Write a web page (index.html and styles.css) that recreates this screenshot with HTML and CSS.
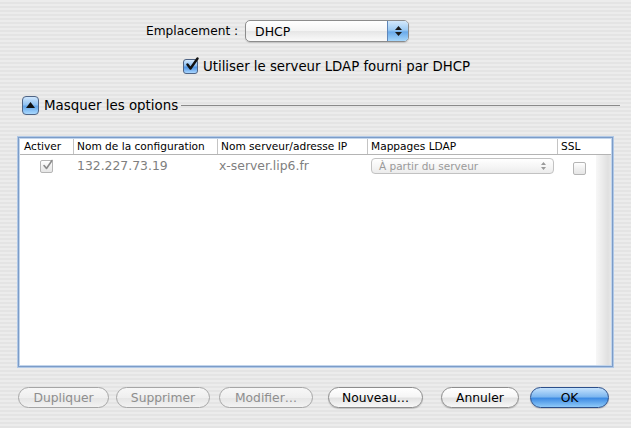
FILE: index.html
```html
<!DOCTYPE html>
<html>
<head>
<meta charset="utf-8">
<link rel="stylesheet" href="styles.css">
</head>
<body>
<div class="dialog">
  <div class="loc-row">
    <span class="label">Emplacement :</span>
    <div class="popup">
      <span class="popup-text">DHCP</span>
      <span class="popup-arrows">
        <svg width="9" height="12" viewBox="0 0 9 12"><path d="M4.5 1 L8 5 L1 5 Z M4.5 11 L8 7 L1 7 Z" fill="#1a1a1a"/></svg>
      </span>
    </div>
  </div>

  <div class="check-row">
    <span class="checkbox checked">
      <svg width="16" height="16" viewBox="0 0 16 16"><path d="M3.5 7.5 L6.5 11.5 L13.5 1.5" fill="none" stroke="#111" stroke-width="2.4" stroke-linecap="round" stroke-linejoin="round"/></svg>
    </span>
    <span class="check-label">Utiliser le serveur LDAP fourni par DHCP</span>
  </div>

  <div class="disclosure-row">
    <span class="disclosure">
      <svg width="9" height="6" viewBox="0 0 9 6"><path d="M4.5 0 L9 6 L0 6 Z" fill="#111"/></svg>
    </span>
    <span class="disc-label">Masquer les options</span>
    <span class="disc-line"></span>
  </div>

  <div class="table-frame">
    <div class="thead">
      <div class="th th-first">Activer</div>
      <div class="th">Nom de la configuration</div>
      <div class="th">Nom serveur/adresse IP</div>
      <div class="th">Mappages LDAP</div>
      <div class="th">SSL</div>
      <div class="th th-corner"></div>
    </div>
    <div class="tbody">
      <div class="rows">
        <div class="tr">
          <div class="td td-center">
            <span class="checkbox small disabled">
              <svg width="13" height="13" viewBox="0 0 13 13"><path d="M3 6.5 L5.5 9.5 L11 1.5" fill="none" stroke="#8a8a8a" stroke-width="1.6" stroke-linecap="round" stroke-linejoin="round"/></svg>
            </span>
          </div>
          <div class="td td-text">132.227.73.19</div>
          <div class="td td-text td-server">x-server.lip6.fr</div>
          <div class="td">
            <div class="mini-popup">
              <span>À partir du serveur</span>
              <svg width="7" height="10" viewBox="0 0 7 10"><path d="M3.5 1 L6 4 L1 4 Z M3.5 9 L6 6 L1 6 Z" fill="#9a9a9a"/></svg>
            </div>
          </div>
          <div class="td td-ssl">
            <span class="checkbox small disabled"></span>
          </div>
        </div>
      </div>
      <div class="scroll-strip"></div>
    </div>
  </div>

  <div class="buttons">
    <span class="btn disabled b-dup">Dupliquer</span>
    <span class="btn disabled b-sup">Supprimer</span>
    <span class="btn disabled b-mod">Modifier…</span>
    <span class="btn b-new">Nouveau…</span>
    <span class="btn b-ann">Annuler</span>
    <span class="btn default b-ok">OK</span>
  </div>
</div>
</body>
</html>
```

FILE: styles.css
```css
html, body {
  margin: 0;
  padding: 0;
}
body {
  width: 631px;
  height: 428px;
  overflow: hidden;
  font-family: "DejaVu Sans", "Liberation Sans", sans-serif;
  font-size: 12px;
  color: #000;
  background: repeating-linear-gradient(to bottom, #ececec 0px, #ececec 2px, #e4e4e4 2px, #e4e4e4 4px);
}
.dialog {
  display: flex;
  flex-direction: column;
  height: 428px;
}

/* location row */
.loc-row {
  display: flex;
  align-items: center;
  padding: 20px 0 0 146px;
  height: 22px;
}
.label {
  width: 99px;
  font-size: 12.2px;
}
.popup {
  display: flex;
  align-items: center;
  width: 162px;
  height: 20px;
  border: 1px solid #8c8c8c;
  border-radius: 5px;
  background: linear-gradient(to bottom, #ffffff 0%, #f4f4f4 50%, #e6e6e6 51%, #fafafa 100%);
  box-shadow: 0 1px 1px rgba(0,0,0,0.15);
  overflow: hidden;
  font-size: 12.5px;
}
.popup-text {
  flex: 1;
  padding-left: 9px;
}
.popup-arrows {
  width: 20px;
  height: 20px;
  display: flex;
  align-items: center;
  justify-content: center;
  border-left: 1px solid #5f86b9;
  background: linear-gradient(to bottom, #d4e9fb 0%, #9ccaf3 45%, #6aaaea 55%, #a7d7fb 100%);
}

/* checkbox row */
.check-row {
  display: flex;
  align-items: center;
  padding: 16px 0 0 183px;
  height: 16px;
}
.checkbox {
  position: relative;
  display: inline-block;
  width: 13px;
  height: 13px;
  border: 1px solid #4f6485;
  border-radius: 3px;
  background: linear-gradient(to bottom, #d8ecff 0%, #86baf0 45%, #4f94e4 55%, #a9d6ff 100%);
  box-sizing: content-box;
}
.checkbox svg {
  position: absolute;
  left: 0;
  top: -3px;
}
.check-label {
  margin-left: 5px;
  font-size: 13.3px;
}

/* disclosure */
.disclosure-row {
  display: flex;
  align-items: center;
  padding: 22px 11px 0 22px;
  height: 19px;
}
.disclosure {
  width: 15px;
  height: 17px;
  border: 1px solid #4f6485;
  border-radius: 4px;
  display: flex;
  align-items: center;
  justify-content: center;
  background: linear-gradient(to bottom, #cfe6fd 0%, #91c3f3 45%, #64a6ea 55%, #a9d8fd 100%);
}
.disclosure svg {
  margin-top: -2px;
}
.disc-label {
  margin-left: 5px;
  font-size: 13.4px;
}
.disc-line {
  flex: 1;
  height: 1px;
  background: #8a8a8a;
  margin-left: 3px;
}

/* table */
.table-frame {
  margin: 22px 18px 0 18px;
  height: 228px;
  border: 1px solid #7c9cc8;
  box-shadow: 0 0 0 1px #b0c8e6, inset 0 0 0 1px #c2d5ec;
  background: #fff;
  display: flex;
  flex-direction: column;
}
.thead {
  display: grid;
  grid-template-columns: 53px 144px 150px 190px 53px;
  height: 15px;
  border-bottom: 1px solid #b4b4b4;
  background: #fff;
  margin: 1px 1px 0 1px;
  font-size: 10.6px;
}
.th {
  border-left: 1px solid #c4c4c4;
  padding-left: 3px;
  line-height: 15px;
  white-space: nowrap;
  overflow: hidden;
}
.th-first {
  border-left: none;
  padding-left: 4px;
}
.th-corner {
  display: none;
}
.tbody {
  flex: 1;
  display: flex;
  margin: 0 1px 1px 1px;
}
.rows {
  flex: 1;
}
.tr {
  display: grid;
  grid-template-columns: 53px 144px 150px 190px 38px;
  height: 21px;
  align-items: center;
}
.td {
  white-space: nowrap;
}
.td-center {
  display: flex;
  justify-content: center;
  padding-top: 1px;
}
.td-text {
  color: #7f7f7f;
  font-size: 12.4px;
  padding-left: 4px;
}
.td-server {
  padding-left: 2px;
}
.checkbox.small {
  width: 11px;
  height: 11px;
  border: 1px solid #b5b5b5;
  border-radius: 2px;
  background: linear-gradient(to bottom, #ffffff 0%, #f0f0f0 50%, #e6e6e6 100%);
}
.checkbox.small svg {
  top: -2px;
}
.td-ssl {
  display: flex;
  justify-content: center;
  padding-top: 6px;
  padding-left: 7px;
}
.mini-popup {
  margin-left: 4px;
  width: 168px;
  height: 14px;
  border: 1px solid #c2c2c2;
  border-radius: 4px;
  background: linear-gradient(to bottom, #ffffff 0%, #f6f6f6 50%, #ececec 100%);
  display: flex;
  align-items: center;
  justify-content: space-between;
  padding: 0 6px 0 7px;
  box-sizing: content-box;
  color: #9a9a9a;
  font-size: 10.5px;
  margin-top: 1px;
}
.scroll-strip {
  width: 15px;
  background: linear-gradient(to right, #f7f7f7 0%, #ececec 40%, #e0e0e0 80%, #e8e8e8 100%);
}

/* buttons */
.buttons {
  display: flex;
  align-items: center;
  padding: 20px 0 0 18px;
}
.btn {
  display: flex;
  align-items: center;
  justify-content: center;
  height: 19px;
  border: 1px solid #8d8d8d;
  border-radius: 11px;
  background: linear-gradient(to bottom, #ffffff 0%, #f6f6f6 45%, #e2e2e2 55%, #f8f8f8 100%);
  box-shadow: 0 1px 1px rgba(0,0,0,0.18);
  font-size: 12.3px;
  box-sizing: content-box;
}
.btn.disabled {
  color: #8e8e8e;
  border-color: #a6a6a6;
  background: linear-gradient(to bottom, #f7f7f7 0%, #efefef 50%, #e6e6e6 55%, #f2f2f2 100%);
  box-shadow: none;
}
.btn.default {
  border-color: #2c4f8a;
  background: linear-gradient(to bottom, #c4e2fd 0%, #7fb8f0 45%, #3f8ce3 55%, #8fcaf9 100%);
}
.b-dup { width: 89px; }
.b-sup { width: 92px; margin-left: 7px; }
.b-mod { width: 92px; margin-left: 9px; }
.b-new { width: 93px; margin-left: 15px; }
.b-ann { width: 76px; margin-left: 18px; }
.b-ok  { width: 77px; margin-left: 11px; }
```
